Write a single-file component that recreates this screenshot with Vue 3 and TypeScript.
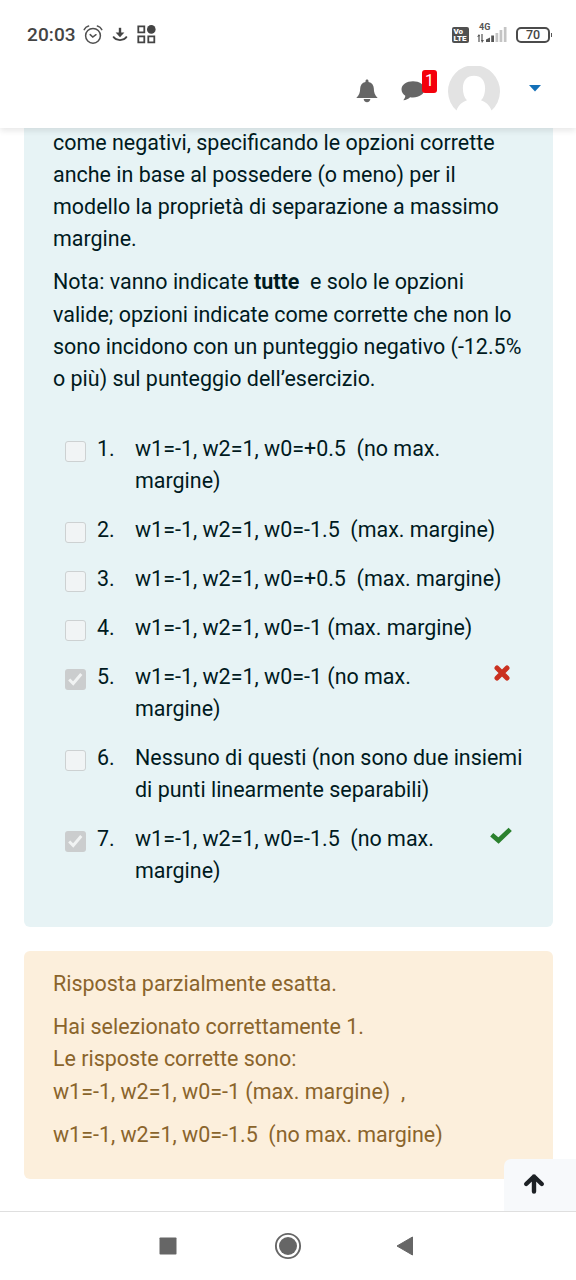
<script setup lang="ts">
interface Answer {
  lines: string[]
  checked?: boolean
  mark?: 'wrong' | 'right'
}

const answers: Answer[] = [
  { lines: ['w1=-1, w2=1, w0=+0.5\u00a0 (no max.', 'margine)'] },
  { lines: ['w1=-1, w2=1, w0=-1.5\u00a0 (max. margine)'] },
  { lines: ['w1=-1, w2=1, w0=+0.5\u00a0 (max. margine)'] },
  { lines: ['w1=-1, w2=1, w0=-1 (max. margine)'] },
  { lines: ['w1=-1, w2=1, w0=-1 (no max.', 'margine)'], checked: true, mark: 'wrong' },
  { lines: ['Nessuno di questi (non sono due insiemi', 'di punti linearmente separabili)'] },
  { lines: ['w1=-1, w2=1, w0=-1.5\u00a0 (no max.', 'margine)'], checked: true, mark: 'right' },
]
</script>

<template>
  <div class="screen">
    <header class="top">
      <div class="status">
        <span class="clock">20:03</span>
        <svg class="s-alarm" width="20" height="20" viewBox="0 0 20 20" fill="none" stroke="#505050" stroke-width="1.5" stroke-linecap="round">
          <circle cx="10" cy="10.8" r="7.4" />
          <path d="M7.2 9.6 9.8 12l3.2-2.3M1.2 4.6C2 3 3.6 1.6 5.6 1.1M18.8 4.6C18 3 16.4 1.6 14.4 1.1" />
        </svg>
        <svg class="s-down" width="16" height="16" viewBox="0 0 16 16" fill="none" stroke="#444" stroke-width="2.4">
          <path d="M8 .8v6" />
          <path d="M3.6 5.400h8.800L8 10.200z" fill="#444" stroke="none" />
          <path d="M1.2 9.600c3 4.600 10.600 4.600 13.600 0" stroke-width="1.800" />
        </svg>
        <svg class="s-apps" width="19" height="19" viewBox="0 0 19 19" fill="none" stroke="#444" stroke-width="1.800">
          <path d="M1.300 1.300h6v6h-6zM1.300 11.300h6v6h-6zM11.300 11.300h6v6h-6z" />
          <circle cx="14.300" cy="4.400" r="4.300" fill="#444" stroke="none" />
        </svg>
        <span class="volte"><span>Vo</span><span>LTE</span></span>
        <span class="signal">
          <span class="net">4G</span>
          <svg width="30" height="16" viewBox="0 0 30 16">
            <path d="M2 6v7M5 5v7" stroke="#555" stroke-width="1.2" />
            <path d="M0 8l2-3 1 2zM4 11l1 3 2-3z" fill="#555" />
            <path d="M9 13v-2.500l4-2V13z" fill="#555" />
            <path d="M14.200 6.500h2.800V13h-2.800z" fill="#555" />
            <path d="M18.500 4h2.700v9h-2.700zM22.600 1h2.700v12h-2.700zM26.800-2h2.700v15h-2.700z" fill="#c4c4c4" />
          </svg>
        </span>
        <span class="battery"><span>70</span></span>
      </div>
      <nav class="bar">
        <svg class="bell" width="22" height="24" viewBox="0 0 22 24" fill="#666">
          <path d="M11 .6c.9 0 1.500.7 1.500 1.600v.7c3.500.7 5.200 3.200 5.300 6.400.1 4 .8 6.900 3.900 9.700H.3c3.100-2.800 3.800-5.700 3.900-9.700.1-3.200 1.800-5.700 5.300-6.400v-.7c0-.9.6-1.600 1.500-1.600z" />
          <path d="M7.700 20h6.600c0 1.900-1.400 3.300-3.300 3.300S7.700 21.900 7.700 20z" />
        </svg>
        <span class="chat">
          <svg width="24" height="22" viewBox="0 0 24 22" fill="#666">
            <path d="M12 1.200c6.300 0 11.500 3.400 11.500 8.100s-5.200 8.200-11.500 8.200c-1 0-2-.1-2.900-.3-1.800 1.700-4.100 2.800-6.800 3 1.300-1.500 1.900-2.800 2-4.400C2 14.300.5 12 .5 9.300.5 4.600 5.700 1.200 12 1.200z" />
          </svg>
          <span class="badge">1</span>
        </span>
        <svg class="avatar" width="52" height="52" viewBox="0 0 52 52">
          <path d="M8.500 44.500A26 26 0 1 1 43.500 44.500C41.500 39 37.500 35.800 33 34.300 36 31.500 37 27 37.100 22.500 37.200 14.500 33 9.800 26 9.800S14.800 14.500 14.900 22.500C15 27 16 31.500 19 34.300 14.500 35.800 10.500 39 8.500 44.500z" fill="#e3e3e3" />
        </svg>
        <svg class="caret" width="12" height="7" viewBox="0 0 12 7"><path d="M0 0h12L6 6.400z" fill="#1370b8" /></svg>
      </nav>
    </header>

    <main class="content">
      <section class="question">
        <p>come negativi, specificando le opzioni corrette<br />anche in base al possedere (o meno) per il<br />modello la proprietà di separazione a massimo<br />margine.</p>
        <p>Nota: vanno indicate <b>tutte</b>&nbsp; e solo le opzioni<br />valide; opzioni indicate come corrette che non lo<br />sono incidono con un punteggio negativo (-12.5%<br />o più) sul punteggio dell’esercizio.</p>
        <div class="answers">
          <div v-for="(a, i) in answers" :key="i" class="answer">
            <span class="box" :class="{ checked: a.checked }">
              <svg v-if="a.checked" width="20" height="20" viewBox="0 0 20 20"><path d="M4.200 10.500l4 4L16.300 5" fill="none" stroke="#f1f3f3" stroke-width="2.900" /></svg>
            </span>
            <span class="num">{{ i + 1 }}.</span>
            <div class="label"><div v-for="l in a.lines" :key="l">{{ l }}</div></div>
            <svg v-if="a.mark === 'wrong'" class="wrong" width="18" height="18" viewBox="0 0 18 18"><path d="M4 4l10 10M14 4L4 14" stroke="#ca3120" stroke-width="5" stroke-linecap="round" /></svg>
            <svg v-if="a.mark === 'right'" class="right" width="22" height="18" viewBox="0 0 22 18"><path d="M3.500 9.200l5 4.300L18.500 4" fill="none" stroke="#2b812e" stroke-width="4.700" stroke-linecap="square" /></svg>
          </div>
        </div>
      </section>

      <section class="feedback">
        <p>Risposta parzialmente esatta.</p>
        <p>Hai selezionato correttamente 1.<br />Le risposte corrette sono:<br />w1=-1, w2=1, w0=-1 (max. margine)&nbsp; ,</p>
        <p>w1=-1, w2=1, w0=-1.5&nbsp; (no max. margine)</p>
      </section>
      <div class="to-top">
        <svg width="22" height="22" viewBox="0 0 22 22" fill="none" stroke="#1d2125" stroke-width="4.400" stroke-linecap="round" stroke-linejoin="round"><path d="M11 18.500V3.500M3.200 11l7.800-7.500 7.800 7.500" /></svg>
      </div>
    </main>

    <footer class="keys">
      <svg width="18" height="18" viewBox="0 0 18 18"><rect x=".5" y=".5" width="17" height="17" rx=".8" fill="#666" /></svg>
      <svg width="28" height="28" viewBox="0 0 28 28"><circle cx="14" cy="14" r="12.100" fill="none" stroke="#666" stroke-width="1.900" /><circle cx="14" cy="14" r="9" fill="#666" /></svg>
      <svg width="18" height="20" viewBox="0 0 18 20"><path d="M1 10L16.500 1v18z" fill="#666" stroke="#666" stroke-linejoin="round" /></svg>
    </footer>
  </div>
</template>

<style>
body { margin: 0; background: #fff; }
</style>

<style scoped>
.screen {
  width: 576px; height: 1280px; display: flex; flex-direction: column; overflow: hidden;
  background: #fff; font-family: Roboto, "Liberation Sans", sans-serif;
  font-size: 21.460px; line-height: 32.200px;
}
.top { height: 128px; flex: none; box-sizing: border-box; background: #fff; box-shadow: 0 3px 6px rgba(0, 0, 0, .09); z-index: 2; }
.status { height: 62px; box-sizing: border-box; padding: 7px 26px 0 27px; display: flex; align-items: center; color: #444; }
.clock { width: 48px; font-size: 19px; font-weight: 500; line-height: 22px; letter-spacing: .1px; }
.s-alarm { margin-left: 8px; }
.s-down { margin-left: 9px; }
.s-apps { margin-left: 9px; }
.volte {
  margin-left: auto; width: 17px; height: 16px; background: #505050; border-radius: 2px; color: #fff;
  font-size: 8px; font-weight: 900; line-height: 7px; display: flex; flex-direction: column; padding-top: 1px; box-sizing: border-box;
}
.volte span { padding-left: 1.500px; }
.signal { width: 30px; height: 26px; margin: -2px 9px 0 8px; display: flex; flex-direction: column; position: relative; }
.signal svg { margin-top: 8px; flex: none; overflow: visible; }
.net { position: absolute; left: 2px; top: 2px; font-size: 9px; line-height: 9px; font-weight: 700; color: #555; }
.battery {
  position: relative; width: 34px; height: 16px; box-sizing: border-box; border: 2px solid #4b4b4b; border-radius: 5px;
  display: flex; justify-content: center; align-items: center; font-size: 12.500px; line-height: 12px; font-weight: 500;
}
.battery::after { content: ""; position: absolute; right: -4px; top: 4px; width: 1.500px; height: 4px; background: #555; }
.bar { height: 58px; display: flex; align-items: center; padding-left: 356px; }
.bell { flex: none; }
.chat { position: relative; width: 24px; height: 22px; margin: 0 22.500px 0 23px; display: flex; }
.badge {
  position: absolute; left: 21px; top: -10.500px; width: 15px; height: 23px; border-radius: 3px; background: #f4000b;
  color: #fff; font-size: 16px; line-height: 22px; text-align: center;
}
.avatar { flex: none; margin-top: 1px; }
.caret { margin: -6px 0 0 29px; }
.content { flex: 1; min-height: 0; overflow: hidden; position: relative; padding: 0 23px 0 24px; }
.question { display: flow-root; height: 799px; box-sizing: border-box; background: #e7f3f5; border-radius: 0 0 6px 6px; padding: 0 29px; color: #001a1e; }
.question > p:first-child { margin-top: -1.500px; }
p { margin: 0 0 11px; white-space: nowrap; }
.answers { padding: 27px 0 0 11.500px; }
.answer { display: flex; align-items: flex-start; margin-bottom: 16.600px; }
.box { width: 21px; height: 21px; box-sizing: border-box; border: 1.500px solid #cdd1d2; border-radius: 3px; background: #f1f4f5; margin-top: 8px; flex: none; }
.checked { border: 0; background: #cbcdce; }
.box svg { display: block; }
.num { width: 38px; margin-left: 11.500px; flex: none; }
.label { white-space: nowrap; }
.wrong { margin: 3px 13px 0 auto; }
.right { margin: 4px 12.500px 0 auto; }
.feedback { margin-top: 24px; height: 228px; box-sizing: border-box; border-radius: 6px; padding: 17px 29px; background: #fcefdc; color: #8a642b; }
.to-top {
  position: absolute; right: 0; bottom: 0; width: 72px; height: 52px; background: #f7f9fb; border-radius: 7px 0 0 0;
  display: flex; align-items: center; box-sizing: border-box; padding: 0 0 2px 19px;
}
.keys {
  height: 69px; flex: none; box-sizing: border-box; border-top: 1px solid #dfdfdf; background: #fff;
  display: flex; align-items: center; gap: 97px; padding: 0 0 1px 159px;
}
.keys svg:last-child { margin-left: -3px; }
</style>
